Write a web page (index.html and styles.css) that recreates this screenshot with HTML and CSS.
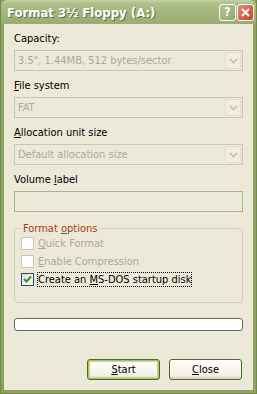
FILE: index.html
```html
<!DOCTYPE html>
<html lang="en">
<head>
    <meta charset="UTF-8">
    <title>Format 3½ Floppy (A:)</title>
    <link rel="stylesheet" href="styles.css">
</head>
<body>
    <div class="window">
        <div class="titlebar">
            <span class="title">Format 3½ Floppy (A:)</span>
            <div class="title-btns">
                <span class="tbtn help">?</span>
                <span class="tbtn close">
                    <svg width="9" height="9" viewBox="0 0 9 9"><path d="M1 1L8 8M8 1L1 8" stroke="#fff" stroke-width="2"/></svg>
                </span>
            </div>
        </div>

        <div class="client">
            <div class="field">
                <label>Capacity:</label>
                <div class="combo"><span>3.5",  1.44MB, 512 bytes/sector</span><span class="drop"><svg width="9" height="6" viewBox="0 0 9 6"><path d="M1 1L4.5 4.5L8 1" stroke="#c9c7ba" stroke-width="2" fill="none"/></svg></span></div>
            </div>
            <div class="field">
                <label><u>F</u>ile system</label>
                <div class="combo"><span>FAT</span><span class="drop"><svg width="9" height="6" viewBox="0 0 9 6"><path d="M1 1L4.5 4.5L8 1" stroke="#c9c7ba" stroke-width="2" fill="none"/></svg></span></div>
            </div>
            <div class="field">
                <label><u>A</u>llocation unit size</label>
                <div class="combo"><span>Default allocation size</span><span class="drop"><svg width="9" height="6" viewBox="0 0 9 6"><path d="M1 1L4.5 4.5L8 1" stroke="#c9c7ba" stroke-width="2" fill="none"/></svg></span></div>
            </div>
            <div class="field">
                <label>Volume <u>l</u>abel</label>
                <div class="textbox"></div>
            </div>

            <fieldset class="group">
                <legend>Format <u>o</u>ptions</legend>
                <div class="check disabled"><span class="box"></span><span><u>Q</u>uick Format</span></div>
                <div class="check disabled"><span class="box"></span><span><u>E</u>nable Compression</span></div>
                <div class="check"><span class="box on"><svg width="9" height="9" viewBox="0 0 9 9"><path d="M1 4L3.5 6.5L8 1.5" stroke="#21a121" stroke-width="2" fill="none"/></svg></span><span class="focus">Create an <u>M</u>S-DOS startup disk</span></div>
            </fieldset>

            <div class="progress"></div>

            <div class="buttons">
                <button class="btn default"><u>S</u>tart</button>
                <button class="btn"><u>C</u>lose</button>
            </div>
        </div>
    </div>
</body>
</html>
```

FILE: styles.css
```css
body {
    margin: 0;
    font-family: "DejaVu Sans Condensed", "DejaVu Sans", sans-serif;
    font-size: 11px;
    background: #fff;
}

.window {
    width: 257px;
    height: 394px;
    box-sizing: border-box;
    display: flex;
    flex-direction: column;
    background: #8ca35f;
    border: 1px solid #6f8a4a;
    border-top: none;
}

.titlebar {
    height: 24px;
    display: flex;
    align-items: center;
    justify-content: space-between;
    padding: 0 2px 0 6px;
    background: linear-gradient(#c6d3a6 0%, #aebf89 15%, #a4b67d 50%, #9bad72 100%);
    border-radius: 6px 6px 0 0;
}

.title {
    color: #fff;
    font-weight: bold;
    font-size: 13px;
    font-family: "DejaVu Sans Condensed", sans-serif;
    text-shadow: 1px 1px 0 #5e6e40;
}

.title-btns {
    display: flex;
    gap: 1px;
}

.tbtn {
    width: 15px;
    height: 15px;
    display: flex;
    align-items: center;
    justify-content: center;
    border: 1px solid #fff;
    border-radius: 3px;
    color: #fff;
    font-weight: bold;
    font-size: 12px;
}

.help {
    background: linear-gradient(135deg, #b4c494, #93a86b);
}

.close {
    background: linear-gradient(135deg, #e88a6a, #c4452a);
}

.client {
    flex: 1;
    margin: 0 3px 3px;
    background: #ece9d8;
    padding: 8px 10px 0 10px;
    display: flex;
    flex-direction: column;
}

.field {
    display: flex;
    flex-direction: column;
    gap: 5px;
    margin-bottom: 8px;
}

.field label {
    color: #000;
    height: 13px;
    line-height: 13px;
}

.combo {
    height: 21px;
    box-sizing: border-box;
    border: 1px solid #c9c7ba;
    background: #ece9d8;
    color: #aca899;
    display: flex;
    align-items: center;
    justify-content: space-between;
    padding: 0 1px 0 3px;
}

.drop {
    width: 16px;
    height: 17px;
    box-sizing: border-box;
    border: 1px solid #e0ded0;
    border-radius: 2px;
    background: #f1efe4;
    display: flex;
    align-items: center;
    justify-content: center;
}

.textbox {
    height: 21px;
    box-sizing: border-box;
    border: 1px solid #a5b97f;
    background: #ece9d8;
}

.group {
    margin: 2px 0 0;
    padding: 2px 6px 16px;
    border: 1px solid #d0d0bf;
    border-radius: 4px;
    display: flex;
    flex-direction: column;
    gap: 5px;
}

.group legend {
    color: #a0440c;
    padding: 0 1px;
    margin-left: 1px;
    line-height: 13px;
}

.check {
    display: flex;
    align-items: center;
    gap: 4px;
    height: 13px;
}

.check .box {
    width: 13px;
    height: 13px;
    box-sizing: border-box;
    border: 1px solid #cac8bb;
    background: #fff;
    display: flex;
    align-items: center;
    justify-content: center;
}

.check .box.on {
    border-color: #1c5180;
    background: linear-gradient(135deg, #dcdcd7, #fff);
}

.check.disabled {
    color: #aca899;
}

.focus {
    outline: 1px dotted #000;
}

.progress {
    margin-top: 15px;
    height: 13px;
    box-sizing: border-box;
    border: 1px solid #686868;
    border-radius: 3px;
    background: #fff;
}

.buttons {
    margin-top: auto;
    margin-bottom: 10px;
    display: flex;
    justify-content: flex-end;
    gap: 9px;
    padding-right: 1px;
}

.btn {
    width: 73px;
    height: 21px;
    font-family: inherit;
    font-size: 11px;
    color: #000;
    border: 1px solid #4b6b23;
    border-radius: 3px;
    background: linear-gradient(#fffffb, #f4f1e4 80%, #d6d0c0);
    padding: 0;
}

.btn.default {
    box-shadow: inset 0 0 0 1px #a3c46d, inset 0 0 0 2px #c4da94;
}
```
